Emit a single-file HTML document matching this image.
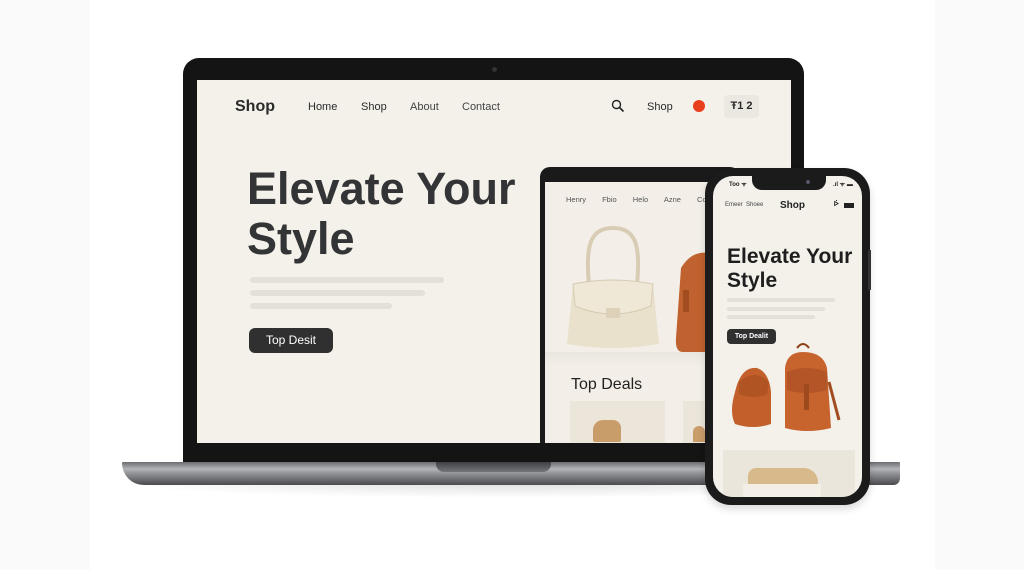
<!DOCTYPE html>
<html><head><meta charset="utf-8"><style>
*{margin:0;padding:0;box-sizing:border-box}
body{width:1024px;height:570px;background:#fff;font-family:"Liberation Sans",sans-serif;position:relative;overflow:hidden}
.a{position:absolute}
.lid{left:183px;top:58px;width:621px;height:404px;background:#141414;border-radius:16px 16px 0 0}
.scr{left:197px;top:80px;width:594px;height:363px;background:#f4f1eb;overflow:hidden}
.base{left:122px;top:462px;width:778px;height:23px;background:linear-gradient(#6b6c70,#b3b4b8 30%,#8a8b8f 55%,#4a4b4f);border-radius:2px 2px 12px 40px}
.notch{left:436px;top:462px;width:115px;height:10px;background:linear-gradient(#3f4044,#74757a);border-radius:0 0 8px 8px}
.dk{color:#2a2a2a}
.ln{background:#e3e0da;height:6px;border-radius:3px}
.btn{background:#2f302f;color:#fff;border-radius:6px;text-align:center}
</style></head><body>
<div class="a" style="left:0;top:0;width:90px;height:570px;background:#fafafa"></div>
<div class="a" style="left:935px;top:0;width:89px;height:570px;background:#fafafa"></div>
<div class="a" style="left:120px;top:484px;width:780px;height:14px;background:radial-gradient(ellipse at 50% 0,rgba(0,0,0,.12),transparent 70%)"></div>
<div class="a lid"></div>
<div class="a base"></div>
<div class="a notch"></div>
<div class="a" style="left:492px;top:67px;width:5px;height:5px;border-radius:50%;background:#333"></div>
<div class="a scr">
 <div class="a dk" style="left:38px;top:18px;font-size:16px;font-weight:bold">Shop</div>
 <div class="a dk" style="left:111px;top:21px;font-size:11px">Home</div>
 <div class="a dk" style="left:164px;top:21px;font-size:11px">Shop</div>
 <div class="a" style="left:213px;top:21px;font-size:11px;color:#444">About</div>
 <div class="a" style="left:265px;top:21px;font-size:11px;color:#444">Contact</div>
 <svg class="a" style="left:414px;top:19px" width="14" height="14" viewBox="0 0 14 14"><circle cx="5.5" cy="5.5" r="4" fill="none" stroke="#222" stroke-width="1.4"/><path d="M8.5 8.5L12.5 12.5" stroke="#222" stroke-width="1.6"/></svg>
 <div class="a dk" style="left:450px;top:21px;font-size:11px">Shop</div>
 <div class="a" style="left:496px;top:20px;width:12px;height:12px;border-radius:50%;background:#e8401c"></div>
 <div class="a dk" style="left:527px;top:15px;width:35px;height:23px;background:#ebe8e2;border-radius:4px;font-size:11px;text-align:center;line-height:23px;font-weight:bold">Ŧ1 2</div>
 <div class="a" style="left:50px;top:84px;font-size:45px;font-weight:bold;line-height:50px;color:#333435">Elevate Your<br>Style</div>
 <div class="a ln" style="left:53px;top:197px;width:194px"></div>
 <div class="a ln" style="left:53px;top:210px;width:175px"></div>
 <div class="a ln" style="left:53px;top:223px;width:142px"></div>
 <div class="a btn" style="left:52px;top:248px;width:84px;height:25px;font-size:12px;line-height:25px">Top Desit</div>
</div>
<!-- tablet -->
<div class="a" style="left:540px;top:167px;width:200px;height:276px;background:#1a1a1a;border-radius:10px 10px 0 0"></div>
<div class="a" style="left:545px;top:182px;width:190px;height:261px;background:#f3efe8;overflow:hidden">
 <div class="a" style="left:21px;top:13px;font-size:7.5px;color:#555;word-spacing:14px;white-space:nowrap">Henry Fbio Helo Azne Coom</div>
 <svg class="a" style="left:18px;top:42px" width="100" height="128" viewBox="0 0 100 128">
  <path d="M26 60C22 20 28 4 50 4S78 20 74 60" fill="none" stroke="#d8cdb4" stroke-width="4"/>
  <path d="M10 60Q50 52 90 60L96 120Q50 128 4 120Z" fill="#e9e1cc"/>
  <path d="M10 60Q50 52 90 60L88 82Q50 98 12 82Z" fill="#efe8d6" stroke="#d6cbb2"/>
  <rect x="43" y="84" width="14" height="10" fill="#ddd2b9"/>
 </svg>
 <svg class="a" style="left:128px;top:66px" width="40" height="104" viewBox="0 0 40 104"><path d="M8 20Q20 0 40 6V104H10Q2 104 3 90Z" fill="#c0622f"/><rect x="10" y="42" width="6" height="22" fill="#a24d20"/></svg>
 <div class="a" style="left:0;top:170px;width:190px;height:14px;background:linear-gradient(rgba(0,0,0,.04),transparent)"></div>
 <div class="a" style="left:26px;top:194px;font-size:16px;color:#222">Top Deals</div>
 <div class="a" style="left:25px;top:219px;width:95px;height:45px;background:#ebe5da"></div>
 <div class="a" style="left:138px;top:219px;width:60px;height:45px;background:#ebe5da"></div>
 <div class="a" style="left:48px;top:238px;width:28px;height:22px;background:#c99d6a;border-radius:10px 8px 2px 2px"></div>
 <div class="a" style="left:148px;top:244px;width:12px;height:16px;background:#c99d6a;border-radius:6px 6px 0 0"></div>
</div>
<!-- phone -->
<div class="a" style="left:705px;top:168px;width:165px;height:337px;background:#1b1b1b;border-radius:26px;box-shadow:0 4px 8px rgba(0,0,0,.15)"></div>
<div class="a" style="left:868px;top:250px;width:3px;height:40px;background:#333"></div>
<div class="a" style="left:713px;top:176px;width:149px;height:321px;background:#f4f1eb;border-radius:20px;overflow:hidden">
 <div class="a" style="left:39px;top:0;width:74px;height:14px;background:#1b1b1b;border-radius:0 0 10px 10px"></div>
 <div class="a" style="left:93px;top:4px;width:4px;height:4px;border-radius:50%;background:#556"></div>
 <div class="a" style="left:16px;top:4px;font-size:6px;font-weight:bold;color:#222">Too ᯤ</div>
 <div class="a" style="left:120px;top:4px;font-size:6px;font-weight:bold;color:#222">.ıl ᯤ ▬</div>
 <div class="a" style="left:12px;top:26px;font-size:6px;color:#444">Emeer&nbsp;&nbsp;Shoee</div>
 <div class="a" style="left:67px;top:24px;font-size:10px;font-weight:bold;color:#222">Shop</div>
 <div class="a" style="left:121px;top:25px;font-size:7px;font-weight:bold;color:#222">ᢰ</div>
 <div class="a" style="left:131px;top:27px;width:10px;height:5px;background:#222"></div>
 <div class="a" style="left:14px;top:69px;font-size:21px;font-weight:bold;line-height:24px;color:#1e1e1e">Elevate Your<br>Style</div>
 <div class="a ln" style="left:14px;top:122px;width:108px;height:4px"></div>
 <div class="a ln" style="left:14px;top:131px;width:98px;height:4px"></div>
 <div class="a ln" style="left:14px;top:139px;width:88px;height:4px"></div>
 <div class="a btn" style="left:14px;top:153px;width:49px;height:15px;font-size:7px;line-height:15px;font-weight:bold;border-radius:4px">Top Dealit</div>
 <svg class="a" style="left:14px;top:166px" width="128" height="92" viewBox="0 0 128 92">
  <path d="M8 50Q14 24 30 26Q42 30 44 50L44 82Q26 88 8 82Q2 70 8 50Z" fill="#c25f2b"/>
  <path d="M12 40Q28 26 42 40L40 52Q26 58 12 52Z" fill="#b05424"/>
  <path d="M70 6Q76 -2 82 6" fill="none" stroke="#8d3f18" stroke-width="2"/>
  <path d="M58 26Q60 10 76 10Q96 10 100 26L104 86Q80 92 58 86Z" fill="#c7632d"/>
  <path d="M60 30Q80 22 100 30L100 48Q80 54 60 48Z" fill="#b35526"/>
  <rect x="77" y="42" width="5" height="26" fill="#9d4a1f"/>
  <path d="M102 40L112 78" stroke="#a24d21" stroke-width="3"/>
 </svg>
 <div class="a" style="left:10px;top:274px;width:132px;height:50px;background:#ebe6dc"></div>
 <div class="a" style="left:35px;top:292px;width:70px;height:18px;background:#d8b98c;border-radius:8px 14px 2px 2px"></div>
 <div class="a" style="left:30px;top:308px;width:78px;height:14px;background:#f3eee6"></div>
</div>
</body></html>
